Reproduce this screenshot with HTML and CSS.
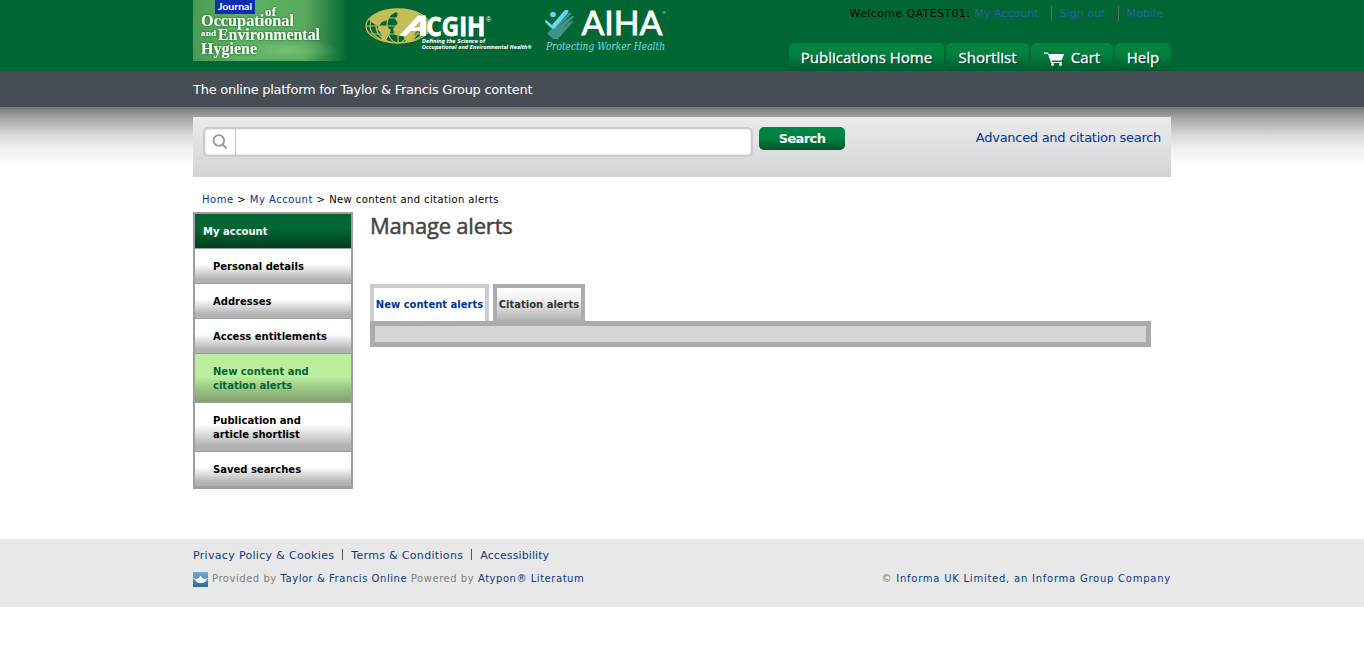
FILE: index.html
```html
<!DOCTYPE html>
<html lang="en">
<head>
<meta charset="utf-8">
<title>Manage alerts</title>
<link rel="stylesheet" href="styles.css">
</head>
<body>
<header class="header">
  <div class="wrap header-inner">
    <svg class="logos" width="500" height="66" viewBox="0 0 500 66">
      <defs>
        <linearGradient id="fade" x1="0" x2="1" y1="0" y2="0">
          <stop offset="0" stop-color="#4c9a54"/>
          <stop offset=".3" stop-color="#5fb163"/>
          <stop offset=".72" stop-color="#5aa95d"/>
          <stop offset=".88" stop-color="#2a8248"/>
          <stop offset="1" stop-color="#006633"/>
        </linearGradient>
        <radialGradient id="light"><stop offset="0" stop-color="#86cc80" stop-opacity=".6"/><stop offset="1" stop-color="#86cc80" stop-opacity="0"/></radialGradient>
        <filter id="glow" x="-10%" y="-20%" width="120%" height="140%"><feDropShadow dx="0" dy="0" stdDeviation="1.2" flood-color="#00512a"/></filter>
        <clipPath id="globe"><ellipse cx="205" cy="26" rx="32" ry="17"/></clipPath>
      </defs>
      <rect width="155" height="61" fill="url(#fade)"/>
      <ellipse cx="95" cy="50" rx="50" ry="11" fill="url(#light)"/>
      <rect x="22" y="0" width="40" height="14" fill="#0a2fb0"/>
      <text x="25" y="10" class="joeh-tag" textLength="34" lengthAdjust="spacingAndGlyphs">Journal</text>
      <g class="joeh" filter="url(#glow)">
        <text x="72" y="16" font-size="13" textLength="11">of</text>
        <text x="8" y="26" font-size="17" textLength="93" lengthAdjust="spacingAndGlyphs">Occupational</text>
        <text x="8" y="36" font-size="9" textLength="15">and</text>
        <text x="25" y="40" font-size="17" textLength="102" lengthAdjust="spacingAndGlyphs">Environmental</text>
        <text x="8" y="53.500" font-size="17" textLength="56" lengthAdjust="spacingAndGlyphs">Hygiene</text>
      </g>
      <ellipse cx="205" cy="26" rx="32" ry="17" fill="#006633" stroke="#c4bd58" stroke-width="1.300"/>
      <g clip-path="url(#globe)">
        <path fill="#c4bd58" d="M178 15l8-4 14-2 3 3-5 3-3 5-6 2-3 4-5-2-5-4-4 1zM186 26l7 0 5 4-2 5-4 7-3-1-1-8-4-4zM200 10l9-2 12 3 11 7 6 8-1 6-8 1-3-3-4 3-1 9-6 3-5-9-8-1-2-6 5-6-3-4 4-5z"/>
        <g fill="none" stroke="#c4bd58" stroke-width="1.200">
          <path d="M205 9v34M172 26h66M175 18h60M175 34h60"/>
          <ellipse cx="205" cy="26" rx="11" ry="17"/><ellipse cx="205" cy="26" rx="22" ry="17"/><ellipse cx="205" cy="26" rx="28" ry="17"/>
        </g>
      </g>
      <path d="M206 36L225 15.500h8V36h-6v-5h-9l-5 5zM221 27.500h6v-6.500z" fill="#fff" fill-rule="evenodd"/>
      <text x="233.500" y="35.500" class="acgih" textLength="59" lengthAdjust="spacingAndGlyphs">CGIH</text>
      <text x="293" y="22" class="reg" font-size="7">®</text>
      <g class="science">
        <text x="229" y="43.200" textLength="63" lengthAdjust="spacingAndGlyphs">Defining the Science of</text>
        <text x="229" y="49" textLength="110" lengthAdjust="spacingAndGlyphs">Occupational and Environmental Health®</text>
      </g>
      <path d="M359 29l8-7 9-9q2-1 2 1l-6 7 7-5q2-1 2 1l-6 6 4-2q2-1 1 1l-8 9-7 8h-5l-6-6z" fill="#40928b"/>
      <path d="M353 20l6 5 12-14q2-2 4-1 1 1 0 3l-13 15q-2 2-4 0l-6-6q0-2 1-2z" fill="#63d7ee"/>
      <circle cx="360" cy="14.500" r="2.800" fill="#63d7ee"/>
      <path d="M368 25l7-8M371 27l8-8M374 29l7-6" stroke="#166f4c" stroke-width=".7"/>
      <text x="388.500" y="35" class="aiha" textLength="81" lengthAdjust="spacingAndGlyphs">AIHA</text>
      <text x="469.500" y="14" class="reg" font-size="4">®</text>
      <text x="353" y="50" class="worker" textLength="119" lengthAdjust="spacingAndGlyphs">Protecting Worker Health</text>
    </svg>
    <div class="header-right">
      <div class="welcome"><span class="w-name">Welcome QATEST01:</span><a class="w-acc">My Account</a><a class="w-out">Sign out</a><a class="w-mob">Mobile</a></div>
      <nav class="tabs">
        <a class="tab tab-home">Publications Home</a><a class="tab tab-short">Shortlist</a><a class="tab tab-cart"><svg width="21" height="15" viewBox="0 0 21 15"><path d="M0 .5h3.500l1.500 1.500h15l-2.500 6.500H7.500L8 10h10v1H7L4 2H0z" fill="#fff"/><circle cx="8.500" cy="12.500" r="1.400" fill="#fff"/><circle cx="16.500" cy="12.500" r="1.400" fill="#fff"/></svg>Cart</a><a class="tab tab-help">Help</a>
      </nav>
    </div>
  </div>
</header>
<div class="strap"><div class="wrap"><span>The online platform for Taylor &amp; Francis Group content</span></div></div>
<main class="main">
  <div class="wrap">
    <form class="search">
      <div class="field"><span class="lens"><svg width="16" height="16" viewBox="0 0 16 16" fill="none" stroke="#9299a3" stroke-width="1.800"><circle cx="6.800" cy="6.500" r="5.300"/><path d="M10.500 10.500l4 4"/></svg></span></div>
      <button class="go" type="button">Search</button>
      <a class="advanced">Advanced and citation search</a>
    </form>
    <div class="crumbs"><a>Home</a> &gt; <a>My Account</a> &gt; <span class="here">New content and citation alerts</span></div>
    <div class="columns">
      <ul class="side">
        <li class="side-head">My account</li>
        <li>Personal details</li>
        <li>Addresses</li>
        <li>Access entitlements</li>
        <li class="tall current">New content and<br>citation alerts</li>
        <li class="tall">Publication and<br>article shortlist</li>
        <li>Saved searches</li>
      </ul>
      <section class="content">
        <h1>Manage alerts</h1>
        <div class="alert-tabs"><a class="atab">New content alerts</a><a class="atab atab-on">Citation alerts</a></div>
        <div class="panel"></div>
      </section>
    </div>
  </div>
</main>
<footer class="footer">
  <div class="wrap">
    <div class="links"><a class="l1">Privacy Policy &amp; Cookies</a><a class="l2">Terms &amp; Conditions</a><a class="l3">Accessibility</a></div>
    <div class="legal">
      <div class="provided"><svg width="15" height="15" viewBox="0 0 15 15"><defs><linearGradient id="sky" x2="0" y2="1"><stop stop-color="#76abd5"/><stop offset="1" stop-color="#2d68a5"/></linearGradient></defs><rect width="15" height="15" fill="url(#sky)"/><path d="M0 6l3 1 3-1 1-2h1l1 2 3 1 3-1-2 3-3 2H5L3 9z" fill="#fff"/></svg><span>Provided by <a>Taylor &amp; Francis Online</a> Powered by <a>Atypon® Literatum</a></span></div>
      <div class="copy">© <a>Informa UK Limited, an Informa Group Company</a></div>
    </div>
  </div>
</footer>
</body>
</html>
```
FILE: styles.css
```css
* { box-sizing: border-box; }
body { margin: 0; background: #fff; font: 11px/14px Verdana, "DejaVu Sans", sans-serif; color: #000; }
a { color: #039; text-decoration: none; }
.wrap { width: 978px; margin: 0 auto; white-space: nowrap; }

.header { height: 71px; background: #063; }
.header-inner { display: flex; justify-content: space-between; height: 71px; }
.logos { display: block; }
.joeh-tag { font: bold 10px Lato, sans-serif; fill: #fff; }
.joeh { font-family: "Liberation Serif", serif; font-weight: bold; fill: #f4fff0; }
.acgih { font: bold 27.5px "Open Sans", sans-serif; fill: #fff; stroke: #fff; stroke-width: .8px; }
.science { font: italic bold 5.5px "DejaVu Sans", sans-serif; fill: #fff; }
.reg { fill: #fff; font-family: "Liberation Sans", sans-serif; }
.aiha { font: 32px Lato, sans-serif; fill: #fff; stroke: #fff; stroke-width: .8px; }
.worker { font: italic 10.5px "DejaVu Serif", serif; fill: #7cdde6; }

.header-right { display: flex; flex-direction: column; justify-content: space-between; align-items: flex-end; }
.welcome { display: flex; padding: 6px 8px 0 0; line-height: 15px; }
.welcome a { color: #2660ac; letter-spacing: .05px; }
.w-name { letter-spacing: .38px; }
.welcome .w-acc { margin-left: 4px; padding-right: 12px; }
.w-out, .w-mob { border-left: 1px solid #5f6b64; padding-left: 8px; }
.w-out { padding-right: 12px; }
.tabs { display: flex; gap: 2px; }
.tab { display: flex; align-items: center; justify-content: center; height: 28px; border-radius: 5px 5px 0 0; background: linear-gradient(#008542, #007f3e 45%, #005f30 90%, #005c2e); color: #fff; font: 15px/28px "Open Sans", sans-serif; text-shadow: 1px 1px 1px #033; -webkit-text-stroke: .3px #fff; }
.tab-home { width: 155px; }
.tab-short { width: 83px; }
.tab-cart { width: 82px; gap: 6px; }
.tab-cart svg { margin-top: 4px; }
.tab-help { width: 56px; }

.strap { height: 36px; padding-top: 1px; background: #464d54; color: #fff; font-size: 13px; line-height: 36px; letter-spacing: -.26px; }

.main { height: 432px; padding-top: 10px; background: linear-gradient(#767676, #a9a9a9 12px, #d8d8d8 28px, #f0f0f0 42px, #fcfcfc 57px, #fff 57px) no-repeat; }
.search { display: flex; align-items: flex-start; height: 60px; padding: 10px; background: linear-gradient(#ebebeb, #d3d4d7); }
.field { width: 550px; height: 30px; border: 2px solid #cbcccd; border-radius: 5px; background: #fff; box-shadow: inset 0 0 2px #bbb; }
.lens { display: flex; align-items: center; justify-content: center; width: 31px; height: 26px; border-right: 1px solid #ccc; }
.go { width: 86px; height: 23px; margin-left: 6px; padding: 0; border: 0; border-radius: 5px; background: linear-gradient(#008744, #008040 50%, #00532a); color: #fff; font: bold 13px/23px "DejaVu Sans", sans-serif; letter-spacing: -.6px; }
.advanced { margin-left: auto; padding-top: 4px; font-size: 13px; letter-spacing: -.28px; }
.crumbs { padding: 16px 0 0 9px; height: 35px; font-size: 10px; letter-spacing: .5px; }
.here { letter-spacing: .4px; }

.columns { display: flex; gap: 17px; }
.side { list-style: none; width: 160px; height: 277px; margin: 0; padding: 0; border: 2px solid #9e9e9e; font-size: 10px; font-weight: bold; }
.side li { height: 35px; padding: 11px 0 0 18px; border-bottom: 1px solid #9e9e9e; background: linear-gradient(#fff 45%, #dcdcdc 65%, #b2b2b2 90%); }
.side .tall { height: 49px; }
.side .side-head { padding-left: 8px; color: #fff; background: linear-gradient(#063 45%, #003d1d); }
.side .current { color: #063; background: linear-gradient(#bbef9f 47%, #9dc886 70%, #80a26c); }
.content { width: 781px; }
h1 { margin: 0; height: 72px; font: 22px/26px "Open Sans", sans-serif; letter-spacing: -.2px; color: #444; -webkit-text-stroke: .5px #444; }
.alert-tabs { display: flex; gap: 4px; height: 37px; font-size: 10px; font-weight: bold; }
.atab { display: flex; align-items: center; justify-content: center; width: 119px; border: 4px solid #caccd3; border-bottom: 0; }
.atab-on { width: 92px; border-color: #acacac; background: linear-gradient(#fff, #f0f0f0 35%, #b0b0b0); color: #333; }
.panel { height: 26px; border: 5px solid #acacac; background: #d6d6d6; }

.footer { height: 68px; background: #e8e8e8; }
.footer a { color: #0a3a80; }
.links { display: flex; padding-top: 9px; height: 33px; letter-spacing: .32px; }
.links a { height: 15px; padding-top: 1px; }
.links .l1, .links .l2 { padding-right: 8px; }
.links .l2, .links .l3 { padding-left: 9px; background: linear-gradient(#555, #555) 0 1px / 1px 11px no-repeat; }
.links .l3 { letter-spacing: .1px; }
.legal { display: flex; justify-content: space-between; color: #808080; font-size: 10px; letter-spacing: .54px; }
.copy { letter-spacing: .76px; }
.provided { display: flex; gap: 4px; }
```
